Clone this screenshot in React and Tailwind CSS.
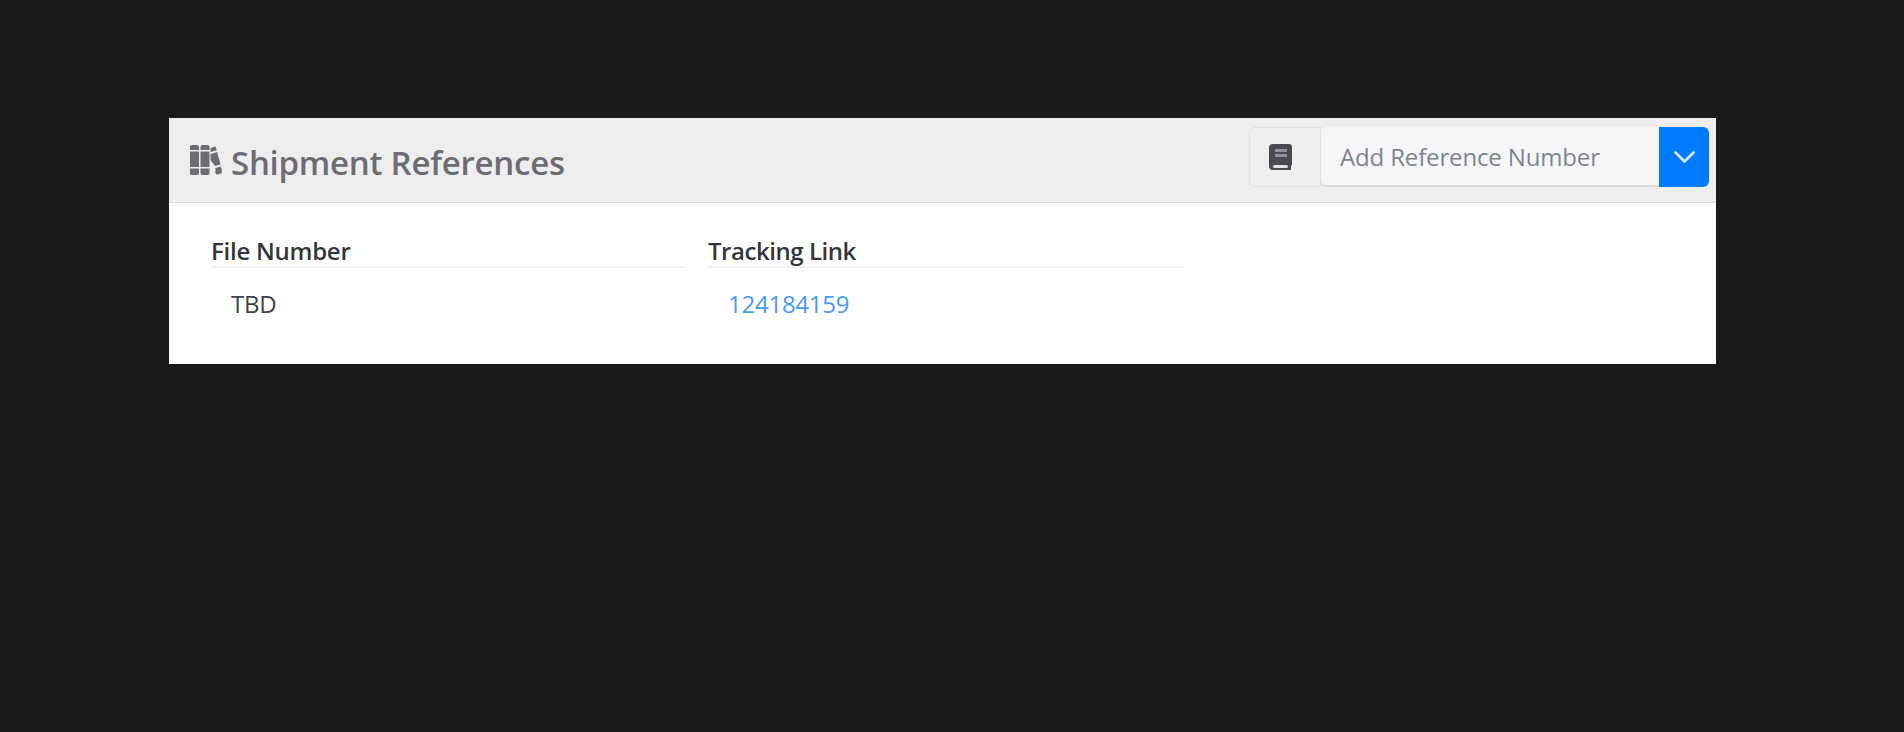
function BooksIcon() {
  return (
    <svg viewBox="0 0 32 30" className="w-[32px] h-[30px] text-[#6c6c72]" fill="currentColor">
      <path d="M0 2a2 2 0 0 1 2-2h5a2 2 0 0 1 2 2v3H0z" />
      <rect x="0" y="6.5" width="9" height="15.5" />
      <path d="M0 23.5h9V28a2 2 0 0 1-2 2H2a2 2 0 0 1-2-2z" />
      <path d="M10.5 2a2 2 0 0 1 2-2h5a2 2 0 0 1 2 2v3h-9z" />
      <rect x="10.5" y="6.5" width="9" height="15.5" />
      <path d="M10.5 23.5h9V28a2 2 0 0 1-2 2h-5a2 2 0 0 1-2-2z" />
      <path d="M20.5 3l5-1.5 1.2 3.8-6.2 1.8z" />
      <path d="M20.5 9l6.6-2 3.4 12.5-5.4 1.6-4.6-6z" />
      <path d="M25.4 23l5.6-1.6 1 4.8a2 2 0 0 1-1.4 2.4l-2.8.8a2 2 0 0 1-2.4-1.4z" />
    </svg>
  );
}

function BookIcon() {
  return (
    <svg viewBox="0 0 23 26" className="w-[23px] h-[26px]">
      <path d="M4 0h16a3 3 0 0 1 3 3v17a2 2 0 0 1-1 1.7V26H4a4 4 0 0 1-4-4V4a4 4 0 0 1 4-4z" fill="#454b50" />
      <rect x="6" y="5" width="12" height="3" fill="#8d9398" />
      <rect x="6" y="10" width="12" height="3" fill="#8d9398" />
      <rect x="4" y="21" width="15" height="3" rx="1.5" fill="#dfe1e3" />
    </svg>
  );
}

function ChevronIcon() {
  return (
    <svg viewBox="0 0 21 12" className="w-[21px] h-[12px]" fill="none" stroke="#dcebff" strokeWidth="2.6" strokeLinecap="round" strokeLinejoin="round">
      <path d="M1.5 1.5l9 9 9-9" />
    </svg>
  );
}

export default function App() {
  return (
    <div className="min-h-[732px] bg-[#191919] pt-[118px] pl-[169px] font-['Open_Sans','Noto_Sans',sans-serif]">
      <div className="w-[1547px] h-[246px] bg-white flex flex-col">
        {/* Card header */}
        <div className="h-[85px] bg-[#eeeeef] border-b border-[#dcdcdc] flex items-center justify-between pl-[21px] pr-[7px]">
          <div className="flex items-center gap-[9px]">
            <BooksIcon />
            <h2 className="text-[33px] leading-[40px] font-semibold text-[#6c6c72] mt-[5px] tracking-[-0.26px]">Shipment References</h2>
          </div>
          <div className="flex h-[60px] w-[460px] mt-[-6px]">
            <div className="w-[72px] bg-[#efefef] border border-[#dfe0e1] rounded-l-[6px] flex items-center justify-center pr-[10px]">
              <BookIcon />
            </div>
            <div className="flex-1 bg-[#f6f7f8] border-b-2 border-[#d8dadc] flex items-center pl-[19px] pt-[2px] rounded-l-[6px]">
              <span className="text-[24px] text-[#7d858c] tracking-[-0.15px]">Add Reference Number</span>
            </div>
            <button className="w-[50px] bg-[#007bff] rounded-r-[6px] flex items-center justify-center">
              <ChevronIcon />
            </button>
          </div>
        </div>
        {/* Reference table */}
        <div className="grid grid-cols-[475px_477px] gap-x-[22px] pl-[42px] pt-[32px]">
          <div className="border-b-2 border-[#f3f3f3] h-[33px] text-[24px] leading-[32px] font-semibold text-[#33373b] tracking-[-0.25px]">File Number</div>
          <div className="border-b-2 border-[#f3f3f3] h-[33px] text-[24px] leading-[32px] font-semibold text-[#33373b] tracking-[-0.45px]">Tracking Link</div>
          <div className="pl-[20px] pt-[20px] text-[24px] leading-[32px] text-[#3f4448] tracking-[-0.25px]">TBD</div>
          <div className="pl-[20px] pt-[20px] text-[24px] leading-[32px] text-[#4a98f7] tracking-[-0.25px]">
            <a href="#">124184159</a>
          </div>
        </div>
      </div>
    </div>
  );
}
